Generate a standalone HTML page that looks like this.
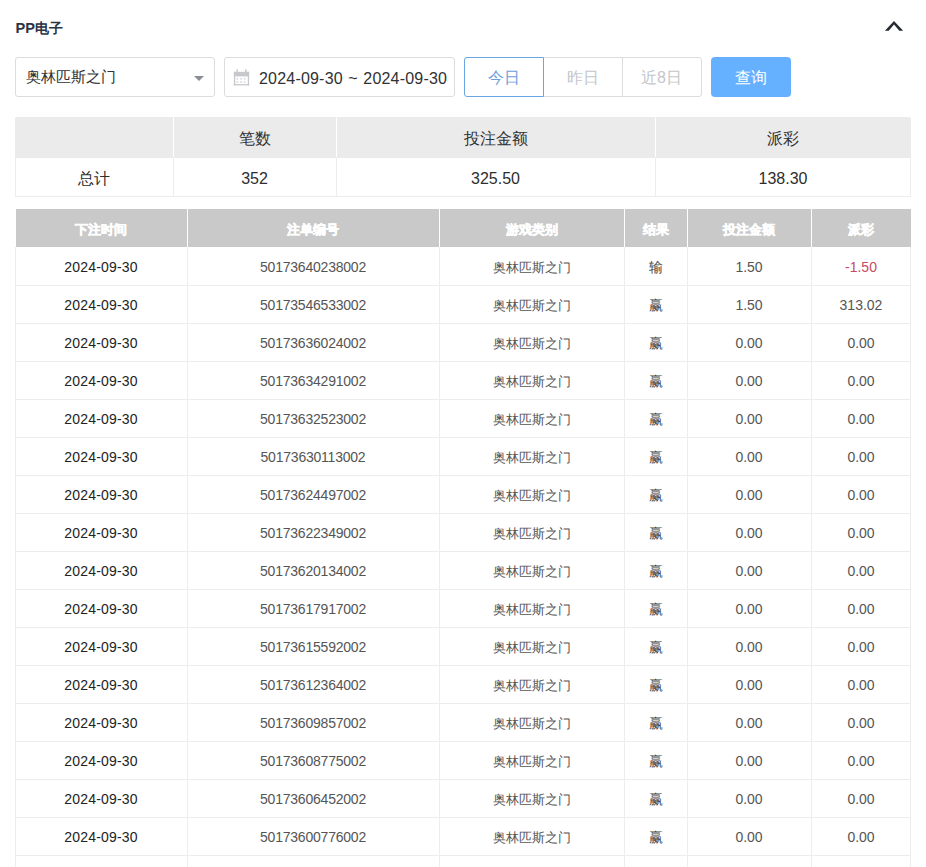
<!DOCTYPE html>
<html><head><meta charset="utf-8">
<style>
*{box-sizing:border-box;margin:0;padding:0}
html,body{width:926px;height:867px;overflow:hidden;background:#fff;font-family:"Liberation Sans",sans-serif;position:relative}
.box{position:absolute}
.title{position:absolute;left:15.5px;top:19px;font-size:14.6px;font-weight:bold;color:#2b3445;line-height:18px;white-space:nowrap}
.title span{font-size:14.2px}
.chev{position:absolute;left:0;top:0}
.sel{position:absolute;left:15px;top:57px;width:200px;height:40px;border:1px solid #dcdcdc;border-radius:3px;}
.sel .t{position:absolute;left:10px;top:0.4px;line-height:38px;font-size:15.4px;color:#303133;white-space:nowrap}
.sel .caret{position:absolute;left:178px;top:18px;width:0;height:0;border-left:5px solid transparent;border-right:5px solid transparent;border-top:5px solid #8a8d93}
.date{position:absolute;left:224px;top:57px;width:231px;height:40px;border:1px solid #dcdcdc;border-radius:3px;}
.date .t{position:absolute;left:34px;top:1.6px;line-height:38px;font-size:16px;color:#303133;white-space:nowrap;letter-spacing:0.2px;word-spacing:0.8px}
.date svg{position:absolute;left:8px;top:11px}
.btn{position:absolute;top:57px;height:40px;width:80px;border:1px solid #dcdcdc;font-size:16px;line-height:40px;text-align:center;color:#c4c6ca;background:#fff;white-space:nowrap}
.btn i{font-style:normal;font-size:16px}
.b1{left:464px;border-color:#6aa6e2;color:#6c9fdc;border-radius:3px 0 0 3px;z-index:2}
.b2{left:543px;}
.b3{left:622px;border-radius:0 3px 3px 0}
.q{position:absolute;left:711px;top:57px;width:80px;height:40px;border-radius:4px;background:#66b1ff;color:#fff;font-size:16px;line-height:41px;text-align:center}
.sh,.sb,.mh,.md{position:absolute;text-align:center;white-space:nowrap}
.sh{font-size:15.8px;color:#303133}
.sb{font-size:16px;color:#2e2e2e}
.sb.cjk{font-size:15.8px}
.mh{font-size:13.4px;font-weight:bold;color:#fff;-webkit-text-stroke:0.5px #fff}
.md{font-size:14px;color:#555}
.md.cjk{font-size:13.1px;padding-top:1px}
.md.res{color:#444;font-size:14px;padding-top:0}
.md.dk{color:#222;letter-spacing:0.18px}
.md.no{letter-spacing:-0.22px}
.neg{color:#c84a63}
</style></head><body>
<div class="title">PP<span>电子</span></div>
<svg class="chev" width="926" height="50"><polygon points="884.9,30.7 894,21 903.2,30.7 899.3,30.7 894,24.6 888.7,30.7" fill="#262b33"/></svg>
<div class="sel"><span class="t">奥林匹斯之门</span><span class="caret"></span></div>
<div class="date"><svg width="18" height="18" viewBox="0 0 18 18"><g fill="#c6c8cc"><rect x="3.4" y="0.3" width="1.4" height="3"/><rect x="12" y="0.3" width="1.6" height="3"/><rect x="0.9" y="2.8" width="15.2" height="4.6"/><rect x="0.9" y="2.8" width="1.3" height="13.6"/><rect x="14.8" y="2.8" width="1.3" height="13.6"/><rect x="0.9" y="15.1" width="15.2" height="1.3"/></g><g fill="#d3d5d9"><rect x="3.5" y="8.9" width="1.6" height="1.6"/><rect x="7.4" y="8.9" width="1.6" height="1.6"/><rect x="10.8" y="8.9" width="1.6" height="1.6"/><rect x="3.5" y="12.3" width="1.6" height="1.6"/><rect x="7.4" y="12.3" width="1.6" height="1.6"/><rect x="10.8" y="12.3" width="1.6" height="1.6"/></g></svg><span class="t">2024-09-30 ~ 2024-09-30</span></div>
<div class="btn b1">今日</div>
<div class="btn b2">昨日</div>
<div class="btn b3" style="text-indent:-1px">近<i>8</i>日</div>
<div class="q">查询</div>
<div class="box" style="left:15px;top:117px;width:896px;height:41px;background:#ebebeb;border-radius:2px 2px 0 0"></div>
<div class="box" style="left:173px;top:117px;width:1px;height:41px;background:#fff"></div>
<div class="box" style="left:336px;top:117px;width:1px;height:41px;background:#fff"></div>
<div class="box" style="left:655px;top:117px;width:1px;height:41px;background:#fff"></div>
<div class="box" style="left:15px;top:157px;width:1px;height:40px;background:#ededed"></div>
<div class="box" style="left:910px;top:157px;width:1px;height:40px;background:#ededed"></div>
<div class="box" style="left:15px;top:196px;width:896px;height:1px;background:#ededed"></div>
<div class="box" style="left:173px;top:157px;width:1px;height:40px;background:#ededed"></div>
<div class="box" style="left:336px;top:157px;width:1px;height:40px;background:#ededed"></div>
<div class="box" style="left:655px;top:157px;width:1px;height:40px;background:#ededed"></div>
<div class="sh" style="left:15px;width:158px;top:118.5px;height:40px;line-height:40px"></div>
<div class="sb cjk" style="left:15px;width:158px;top:158.6px;height:39px;line-height:39px">总计</div>
<div class="sh" style="left:173px;width:163px;top:118.5px;height:40px;line-height:40px">笔数</div>
<div class="sb" style="left:173px;width:163px;top:158.6px;height:39px;line-height:39px">352</div>
<div class="sh" style="left:336px;width:319px;top:118.5px;height:40px;line-height:40px">投注金额</div>
<div class="sb" style="left:336px;width:319px;top:158.6px;height:39px;line-height:39px">325.50</div>
<div class="sh" style="left:655px;width:256px;top:118.5px;height:40px;line-height:40px">派彩</div>
<div class="sb" style="left:655px;width:256px;top:158.6px;height:39px;line-height:39px">138.30</div>
<div class="box" style="left:16px;top:209px;width:895px;height:38px;background:#c9c9c9"></div>
<div class="box" style="left:187px;top:209px;width:1px;height:38px;background:#fff"></div>
<div class="box" style="left:439px;top:209px;width:1px;height:38px;background:#fff"></div>
<div class="box" style="left:624px;top:209px;width:1px;height:38px;background:#fff"></div>
<div class="box" style="left:687px;top:209px;width:1px;height:38px;background:#fff"></div>
<div class="box" style="left:811px;top:209px;width:1px;height:38px;background:#fff"></div>
<div class="mh" style="left:15px;width:172px;top:210.5px;height:38px;line-height:38px">下注时间</div>
<div class="mh" style="left:187px;width:252px;top:210.5px;height:38px;line-height:38px">注单编号</div>
<div class="mh" style="left:439px;width:185px;top:210.5px;height:38px;line-height:38px">游戏类别</div>
<div class="mh" style="left:624px;width:63px;top:210.5px;height:38px;line-height:38px">结果</div>
<div class="mh" style="left:687px;width:124px;top:210.5px;height:38px;line-height:38px">投注金额</div>
<div class="mh" style="left:811px;width:100px;top:210.5px;height:38px;line-height:38px">派彩</div>
<div class="box" style="left:15px;top:247px;width:1px;height:620px;background:#ededed"></div>
<div class="box" style="left:187px;top:247px;width:1px;height:620px;background:#ededed"></div>
<div class="box" style="left:439px;top:247px;width:1px;height:620px;background:#ededed"></div>
<div class="box" style="left:624px;top:247px;width:1px;height:620px;background:#ededed"></div>
<div class="box" style="left:687px;top:247px;width:1px;height:620px;background:#ededed"></div>
<div class="box" style="left:811px;top:247px;width:1px;height:620px;background:#ededed"></div>
<div class="box" style="left:910px;top:247px;width:1px;height:620px;background:#ededed"></div>
<div class="box" style="left:15px;top:285px;width:896px;height:1px;background:#ededed"></div>
<div class="md dk" style="left:15px;width:172px;top:248px;height:38px;line-height:38px">2024-09-30</div>
<div class="md no" style="left:187px;width:252px;top:248px;height:38px;line-height:38px">50173640238002</div>
<div class="md cjk" style="left:439px;width:185px;top:248px;height:38px;line-height:38px">奥林匹斯之门</div>
<div class="md res cjk" style="left:624px;width:63px;top:248px;height:38px;line-height:38px">输</div>
<div class="md" style="left:687px;width:124px;top:248px;height:38px;line-height:38px">1.50</div>
<div class="md neg" style="left:811px;width:100px;top:248px;height:38px;line-height:38px">-1.50</div>
<div class="box" style="left:15px;top:323px;width:896px;height:1px;background:#ededed"></div>
<div class="md dk" style="left:15px;width:172px;top:286px;height:38px;line-height:38px">2024-09-30</div>
<div class="md no" style="left:187px;width:252px;top:286px;height:38px;line-height:38px">50173546533002</div>
<div class="md cjk" style="left:439px;width:185px;top:286px;height:38px;line-height:38px">奥林匹斯之门</div>
<div class="md res cjk" style="left:624px;width:63px;top:286px;height:38px;line-height:38px">赢</div>
<div class="md" style="left:687px;width:124px;top:286px;height:38px;line-height:38px">1.50</div>
<div class="md" style="left:811px;width:100px;top:286px;height:38px;line-height:38px">313.02</div>
<div class="box" style="left:15px;top:361px;width:896px;height:1px;background:#ededed"></div>
<div class="md dk" style="left:15px;width:172px;top:324px;height:38px;line-height:38px">2024-09-30</div>
<div class="md no" style="left:187px;width:252px;top:324px;height:38px;line-height:38px">50173636024002</div>
<div class="md cjk" style="left:439px;width:185px;top:324px;height:38px;line-height:38px">奥林匹斯之门</div>
<div class="md res cjk" style="left:624px;width:63px;top:324px;height:38px;line-height:38px">赢</div>
<div class="md" style="left:687px;width:124px;top:324px;height:38px;line-height:38px">0.00</div>
<div class="md" style="left:811px;width:100px;top:324px;height:38px;line-height:38px">0.00</div>
<div class="box" style="left:15px;top:399px;width:896px;height:1px;background:#ededed"></div>
<div class="md dk" style="left:15px;width:172px;top:362px;height:38px;line-height:38px">2024-09-30</div>
<div class="md no" style="left:187px;width:252px;top:362px;height:38px;line-height:38px">50173634291002</div>
<div class="md cjk" style="left:439px;width:185px;top:362px;height:38px;line-height:38px">奥林匹斯之门</div>
<div class="md res cjk" style="left:624px;width:63px;top:362px;height:38px;line-height:38px">赢</div>
<div class="md" style="left:687px;width:124px;top:362px;height:38px;line-height:38px">0.00</div>
<div class="md" style="left:811px;width:100px;top:362px;height:38px;line-height:38px">0.00</div>
<div class="box" style="left:15px;top:437px;width:896px;height:1px;background:#ededed"></div>
<div class="md dk" style="left:15px;width:172px;top:400px;height:38px;line-height:38px">2024-09-30</div>
<div class="md no" style="left:187px;width:252px;top:400px;height:38px;line-height:38px">50173632523002</div>
<div class="md cjk" style="left:439px;width:185px;top:400px;height:38px;line-height:38px">奥林匹斯之门</div>
<div class="md res cjk" style="left:624px;width:63px;top:400px;height:38px;line-height:38px">赢</div>
<div class="md" style="left:687px;width:124px;top:400px;height:38px;line-height:38px">0.00</div>
<div class="md" style="left:811px;width:100px;top:400px;height:38px;line-height:38px">0.00</div>
<div class="box" style="left:15px;top:475px;width:896px;height:1px;background:#ededed"></div>
<div class="md dk" style="left:15px;width:172px;top:438px;height:38px;line-height:38px">2024-09-30</div>
<div class="md no" style="left:187px;width:252px;top:438px;height:38px;line-height:38px">50173630113002</div>
<div class="md cjk" style="left:439px;width:185px;top:438px;height:38px;line-height:38px">奥林匹斯之门</div>
<div class="md res cjk" style="left:624px;width:63px;top:438px;height:38px;line-height:38px">赢</div>
<div class="md" style="left:687px;width:124px;top:438px;height:38px;line-height:38px">0.00</div>
<div class="md" style="left:811px;width:100px;top:438px;height:38px;line-height:38px">0.00</div>
<div class="box" style="left:15px;top:513px;width:896px;height:1px;background:#ededed"></div>
<div class="md dk" style="left:15px;width:172px;top:476px;height:38px;line-height:38px">2024-09-30</div>
<div class="md no" style="left:187px;width:252px;top:476px;height:38px;line-height:38px">50173624497002</div>
<div class="md cjk" style="left:439px;width:185px;top:476px;height:38px;line-height:38px">奥林匹斯之门</div>
<div class="md res cjk" style="left:624px;width:63px;top:476px;height:38px;line-height:38px">赢</div>
<div class="md" style="left:687px;width:124px;top:476px;height:38px;line-height:38px">0.00</div>
<div class="md" style="left:811px;width:100px;top:476px;height:38px;line-height:38px">0.00</div>
<div class="box" style="left:15px;top:551px;width:896px;height:1px;background:#ededed"></div>
<div class="md dk" style="left:15px;width:172px;top:514px;height:38px;line-height:38px">2024-09-30</div>
<div class="md no" style="left:187px;width:252px;top:514px;height:38px;line-height:38px">50173622349002</div>
<div class="md cjk" style="left:439px;width:185px;top:514px;height:38px;line-height:38px">奥林匹斯之门</div>
<div class="md res cjk" style="left:624px;width:63px;top:514px;height:38px;line-height:38px">赢</div>
<div class="md" style="left:687px;width:124px;top:514px;height:38px;line-height:38px">0.00</div>
<div class="md" style="left:811px;width:100px;top:514px;height:38px;line-height:38px">0.00</div>
<div class="box" style="left:15px;top:589px;width:896px;height:1px;background:#ededed"></div>
<div class="md dk" style="left:15px;width:172px;top:552px;height:38px;line-height:38px">2024-09-30</div>
<div class="md no" style="left:187px;width:252px;top:552px;height:38px;line-height:38px">50173620134002</div>
<div class="md cjk" style="left:439px;width:185px;top:552px;height:38px;line-height:38px">奥林匹斯之门</div>
<div class="md res cjk" style="left:624px;width:63px;top:552px;height:38px;line-height:38px">赢</div>
<div class="md" style="left:687px;width:124px;top:552px;height:38px;line-height:38px">0.00</div>
<div class="md" style="left:811px;width:100px;top:552px;height:38px;line-height:38px">0.00</div>
<div class="box" style="left:15px;top:627px;width:896px;height:1px;background:#ededed"></div>
<div class="md dk" style="left:15px;width:172px;top:590px;height:38px;line-height:38px">2024-09-30</div>
<div class="md no" style="left:187px;width:252px;top:590px;height:38px;line-height:38px">50173617917002</div>
<div class="md cjk" style="left:439px;width:185px;top:590px;height:38px;line-height:38px">奥林匹斯之门</div>
<div class="md res cjk" style="left:624px;width:63px;top:590px;height:38px;line-height:38px">赢</div>
<div class="md" style="left:687px;width:124px;top:590px;height:38px;line-height:38px">0.00</div>
<div class="md" style="left:811px;width:100px;top:590px;height:38px;line-height:38px">0.00</div>
<div class="box" style="left:15px;top:665px;width:896px;height:1px;background:#ededed"></div>
<div class="md dk" style="left:15px;width:172px;top:628px;height:38px;line-height:38px">2024-09-30</div>
<div class="md no" style="left:187px;width:252px;top:628px;height:38px;line-height:38px">50173615592002</div>
<div class="md cjk" style="left:439px;width:185px;top:628px;height:38px;line-height:38px">奥林匹斯之门</div>
<div class="md res cjk" style="left:624px;width:63px;top:628px;height:38px;line-height:38px">赢</div>
<div class="md" style="left:687px;width:124px;top:628px;height:38px;line-height:38px">0.00</div>
<div class="md" style="left:811px;width:100px;top:628px;height:38px;line-height:38px">0.00</div>
<div class="box" style="left:15px;top:703px;width:896px;height:1px;background:#ededed"></div>
<div class="md dk" style="left:15px;width:172px;top:666px;height:38px;line-height:38px">2024-09-30</div>
<div class="md no" style="left:187px;width:252px;top:666px;height:38px;line-height:38px">50173612364002</div>
<div class="md cjk" style="left:439px;width:185px;top:666px;height:38px;line-height:38px">奥林匹斯之门</div>
<div class="md res cjk" style="left:624px;width:63px;top:666px;height:38px;line-height:38px">赢</div>
<div class="md" style="left:687px;width:124px;top:666px;height:38px;line-height:38px">0.00</div>
<div class="md" style="left:811px;width:100px;top:666px;height:38px;line-height:38px">0.00</div>
<div class="box" style="left:15px;top:741px;width:896px;height:1px;background:#ededed"></div>
<div class="md dk" style="left:15px;width:172px;top:704px;height:38px;line-height:38px">2024-09-30</div>
<div class="md no" style="left:187px;width:252px;top:704px;height:38px;line-height:38px">50173609857002</div>
<div class="md cjk" style="left:439px;width:185px;top:704px;height:38px;line-height:38px">奥林匹斯之门</div>
<div class="md res cjk" style="left:624px;width:63px;top:704px;height:38px;line-height:38px">赢</div>
<div class="md" style="left:687px;width:124px;top:704px;height:38px;line-height:38px">0.00</div>
<div class="md" style="left:811px;width:100px;top:704px;height:38px;line-height:38px">0.00</div>
<div class="box" style="left:15px;top:779px;width:896px;height:1px;background:#ededed"></div>
<div class="md dk" style="left:15px;width:172px;top:742px;height:38px;line-height:38px">2024-09-30</div>
<div class="md no" style="left:187px;width:252px;top:742px;height:38px;line-height:38px">50173608775002</div>
<div class="md cjk" style="left:439px;width:185px;top:742px;height:38px;line-height:38px">奥林匹斯之门</div>
<div class="md res cjk" style="left:624px;width:63px;top:742px;height:38px;line-height:38px">赢</div>
<div class="md" style="left:687px;width:124px;top:742px;height:38px;line-height:38px">0.00</div>
<div class="md" style="left:811px;width:100px;top:742px;height:38px;line-height:38px">0.00</div>
<div class="box" style="left:15px;top:817px;width:896px;height:1px;background:#ededed"></div>
<div class="md dk" style="left:15px;width:172px;top:780px;height:38px;line-height:38px">2024-09-30</div>
<div class="md no" style="left:187px;width:252px;top:780px;height:38px;line-height:38px">50173606452002</div>
<div class="md cjk" style="left:439px;width:185px;top:780px;height:38px;line-height:38px">奥林匹斯之门</div>
<div class="md res cjk" style="left:624px;width:63px;top:780px;height:38px;line-height:38px">赢</div>
<div class="md" style="left:687px;width:124px;top:780px;height:38px;line-height:38px">0.00</div>
<div class="md" style="left:811px;width:100px;top:780px;height:38px;line-height:38px">0.00</div>
<div class="box" style="left:15px;top:855px;width:896px;height:1px;background:#ededed"></div>
<div class="md dk" style="left:15px;width:172px;top:818px;height:38px;line-height:38px">2024-09-30</div>
<div class="md no" style="left:187px;width:252px;top:818px;height:38px;line-height:38px">50173600776002</div>
<div class="md cjk" style="left:439px;width:185px;top:818px;height:38px;line-height:38px">奥林匹斯之门</div>
<div class="md res cjk" style="left:624px;width:63px;top:818px;height:38px;line-height:38px">赢</div>
<div class="md" style="left:687px;width:124px;top:818px;height:38px;line-height:38px">0.00</div>
<div class="md" style="left:811px;width:100px;top:818px;height:38px;line-height:38px">0.00</div>
<div class="box" style="left:15px;top:893px;width:896px;height:1px;background:#ededed"></div>
</body></html>
